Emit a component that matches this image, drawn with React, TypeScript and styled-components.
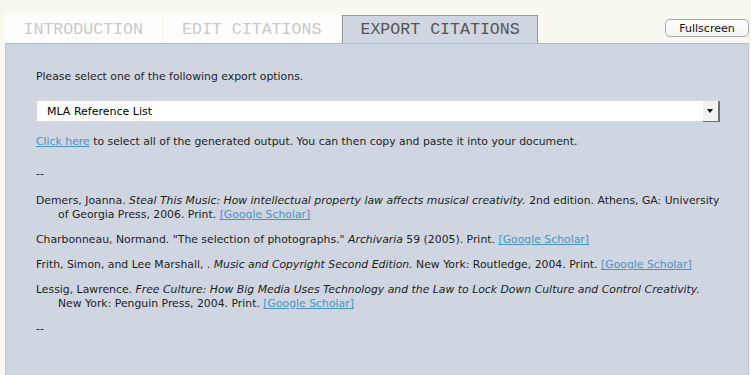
import styled, { createGlobalStyle } from "styled-components";
import { useState } from "react";

const GlobalStyle = createGlobalStyle`
    body {
        margin: 0;
        background-color: #F9F8F1;
        font-family: "DejaVu Sans", "Liberation Sans", sans-serif;
    }
`

type Citation = {
    author: string
    before?: string
    title: string
    after: string
}

const citations: Citation[] = [
    {
        author: "Demers, Joanna. ",
        title: "Steal This Music: How intellectual property law affects musical creativity.",
        after: " 2nd edition. Athens, GA: University of Georgia Press, 2006. Print. ",
    },
    {
        author: "Charbonneau, Normand. ",
        before: "\"The selection of photographs.\" ",
        title: "Archivaria",
        after: " 59 (2005). Print. ",
    },
    {
        author: "Frith, Simon, and Lee Marshall, . ",
        title: "Music and Copyright Second Edition.",
        after: " New York: Routledge, 2004. Print. ",
    },
    {
        author: "Lessig, Lawrence. ",
        title: "Free Culture: How Big Media Uses Technology and the Law to Lock Down Culture and Control Creativity.",
        after: " New York: Penguin Press, 2004. Print. ",
    },
]

const tabs = ["INTRODUCTION", "EDIT CITATIONS", "EXPORT CITATIONS"]

const App = () => {

    const [activeTab, setActiveTab] = useState<number>(2)

    return (
        <Page>
            <GlobalStyle/>
            <TopBar>
                <TabList>
                    {tabs.map((tab, i) => (
                        <Tab key={tab} $isActive={i === activeTab} onClick={() => setActiveTab(i)}>{tab}</Tab>
                    ))}
                </TabList>
                <FullscreenBtn type={"button"}>Fullscreen</FullscreenBtn>
            </TopBar>

            <Panel>
                <Intro>Please select one of the following export options.</Intro>

                <SelectArea>
                    <FormatSelect defaultValue={"mla"}>
                        <option value={"mla"}>MLA Reference List</option>
                        <option value={"apa"}>APA Reference List</option>
                    </FormatSelect>
                    <SelectArrow/>
                </SelectArea>

                <Hint><Link href={"#"}>Click here</Link> to select all of the generated output. You can then copy and paste it into your document.</Hint>

                <Divider>--</Divider>

                {citations.map((c) => (
                    <Entry key={c.author}>
                        {c.author}{c.before}<i>{c.title}</i>{c.after}<Link href={"#"}>[Google Scholar]</Link>
                    </Entry>
                ))}

                <Divider>--</Divider>
            </Panel>
        </Page>
    )
}

export default App

const Page = styled.div`
    padding: 15px 2px 0 5px;
    min-height: 360px;
    display: flex;
    flex-direction: column;
`

const TopBar = styled.div`
    display: flex;
    align-items: flex-start;
    justify-content: space-between;
    height: 28px;
`

const TabList = styled.div`
    display: flex;
    gap: 2px;
    height: 28px;
`

const Tab = styled.div<{ $isActive: boolean }>`
    box-sizing: border-box;
    height: 28px;
    padding: 0 17.5px;
    display: flex;
    align-items: center;
    font-family: "Liberation Mono", "Courier New", monospace;
    font-size: 16.6px;
    cursor: pointer;
    color: ${({$isActive}) => $isActive ? '#555555' : '#C9C9C9'};
    background-color: ${({$isActive}) => $isActive ? '#CFD6E1' : '#FEFEFE'};
    border: 1px solid ${({$isActive}) => $isActive ? '#9B9B9B' : '#FEFEFE'};
    border-bottom: none;
`

const FullscreenBtn = styled.button`
    margin-top: 4px;
    width: 84px;
    height: 18px;
    padding: 0;
    font-family: "DejaVu Sans", "Liberation Sans", sans-serif;
    font-size: 11px;
    color: #111;
    background: linear-gradient(#FFFFFF, #F4F4F4);
    border: 1px solid #A9A9A9;
    border-radius: 5px;

    &:hover {
        cursor: pointer;
    }
`

const Panel = styled.div`
    flex: 1;
    background-color: #CFD6E1;
    border-top: 1px solid #A8C0D4;
    border-left: 1px solid #B4C6D6;
    border-right: 1px solid #B4C6D6;
    padding: 25px 28px 30px 30px;
    font-size: 10.85px;
    line-height: 14px;
    color: #1E1E1E;
`

const Intro = styled.p`
    margin: 1px 0 16px;
`

const SelectArea = styled.div`
    position: relative;
    height: 22px;
`

const FormatSelect = styled.select`
    appearance: none;
    box-sizing: border-box;
    width: 100%;
    height: 22px;
    padding: 0 0 0 10px;
    font-family: "DejaVu Sans", "Liberation Sans", sans-serif;
    font-size: 11px;
    color: #000;
    background-color: #FFFFFF;
    border: 1px solid #D6DBE2;
    border-radius: 0;
    outline: none;
`

const SelectArrow = styled.span`
    position: absolute;
    top: 1px;
    right: 0;
    width: 15px;
    height: 20px;
    background-color: #F2F2F2;
    border-right: 2px solid #6E6E6E;
    border-bottom: 1px solid #6E6E6E;
    pointer-events: none;

    &::after {
        content: "";
        position: absolute;
        left: 4px;
        top: 8px;
        border-left: 3.5px solid transparent;
        border-right: 3.5px solid transparent;
        border-top: 4px solid #111;
    }
`

const Hint = styled.p`
    margin: 13px 0 0;
`

const Link = styled.a`
    color: #4B93C3;
    text-decoration: underline;
`

const Divider = styled.p`
    margin: 18px 0 0;
    &:last-child {
        margin-top: 11px;
    }
`

const Entry = styled.p`
    margin: 13px 0 0;
    padding-left: 22px;
    text-indent: -22px;

    & + & {
        margin-top: 11px;
    }
`
